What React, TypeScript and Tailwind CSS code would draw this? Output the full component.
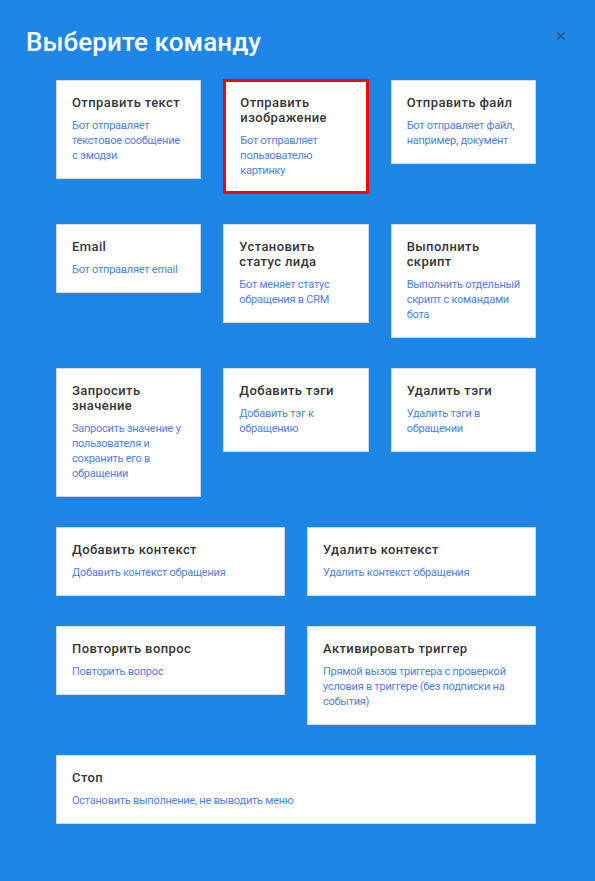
import React from "react";

type Cmd = {
    title: string;
    desc: string;
    active?: boolean;
};

const rows: Cmd[][] = [
    [
        {title: "Отправить текст", desc: "Бот отправляет текстовое сообщение с эмодзи"},
        {title: "Отправить изображение", desc: "Бот отправляет пользователю картинку", active: true},
        {title: "Отправить файл", desc: "Бот отправляет файл, например, документ"},
    ],
    [
        {title: "Email", desc: "Бот отправляет email"},
        {title: "Установить статус лида", desc: "Бот меняет статус обращения в CRM"},
        {title: "Выполнить скрипт", desc: "Выполнить отдельный скрипт с командами бота"},
    ],
    [
        {title: "Запросить значение", desc: "Запросить значение у пользователя и сохранить его в обращении"},
        {title: "Добавить тэги", desc: "Добавить тэг к обращению"},
        {title: "Удалить тэги", desc: "Удалить тэги в обращении"},
    ],
    [
        {title: "Добавить контекст", desc: "Добавить контекст обращения"},
        {title: "Удалить контекст", desc: "Удалить контекст обращения"},
    ],
    [
        {title: "Повторить вопрос", desc: "Повторить вопрос"},
        {title: "Активировать триггер", desc: "Прямой вызов триггера с проверкой условия в триггере (без подписки на события)"},
    ],
    [
        {title: "Стоп", desc: "Остановить выполнение, не выводить меню"},
    ],
];

function Card({cmd}: {cmd: Cmd}) {
    return (
        <div
            className={
                cmd.active
                    ? "bg-white border-[3px] border-[#ff0000] -mt-px pt-[13px] pb-[13px] pl-[14px] pr-[12px]"
                    : "bg-white border border-[#cfd8e3] pt-[14px] pb-[15px] pl-[15px] pr-[14px]"
            }
        >
            <div className="text-[13px] leading-[15px] font-medium text-[#353535] tracking-[0.4px]">
                {cmd.title}
            </div>
            <div className="mt-2 text-[11px] leading-[15px] tracking-[-0.25px] text-[#4d7fe2]">
                {cmd.desc}
            </div>
        </div>
    );
}

export default function App() {
    return (
        <div className="relative w-[595px] min-h-[881px] bg-[#1e86e6] font-['Roboto',sans-serif]">
            {/* close */}
            <button className="absolute left-[557px] top-[32px] w-[8px] h-[8px] flex items-center justify-center">
                <svg width="8" height="8" viewBox="0 0 8 8">
                    <path d="M1 1L7 7M7 1L1 7" stroke="#3b5578" strokeWidth="1.6" strokeLinecap="square"/>
                </svg>
            </button>

            <div className="pt-[27px] pl-[26px] text-[26px] leading-[30px] font-medium text-white tracking-[0.1px]">
                Выберите команду
            </div>

            <div className="mt-[23px] ml-[56px] w-[480px] flex flex-col gap-[30px] pb-[40px]">
                {rows.map((row, i) => (
                    <div
                        key={i}
                        className={
                            row.length === 3
                                ? "grid grid-cols-3 gap-x-[22px] items-start"
                                : row.length === 2
                                    ? "grid grid-cols-2 gap-x-[22px] items-start"
                                    : "grid grid-cols-1 items-start"
                        }
                    >
                        {row.map((c) => (
                            <Card key={c.title} cmd={c}/>
                        ))}
                    </div>
                ))}
            </div>
        </div>
    );
}
